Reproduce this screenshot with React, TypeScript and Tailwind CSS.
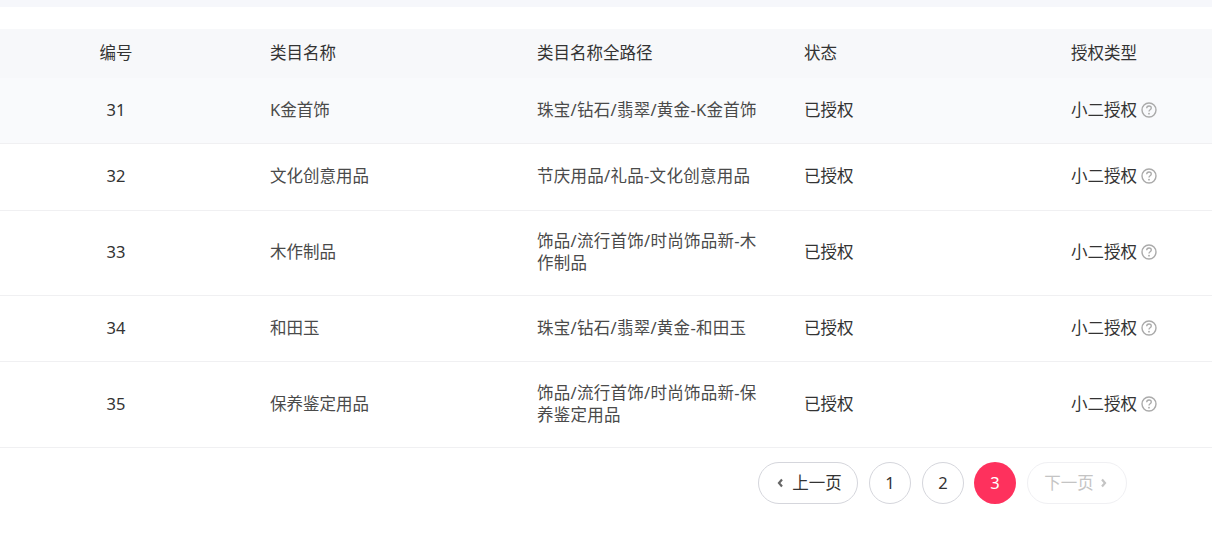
const rows = [
  { id: 31, name: 'K金首饰', path: '珠宝/钻石/翡翠/黄金-K金首饰', h: 'h-[66px]', bg: 'bg-[#f9fafc]' },
  { id: 32, name: '文化创意用品', path: '节庆用品/礼品-文化创意用品', h: 'h-[67px]', bg: 'bg-white' },
  { id: 33, name: '木作制品', path: '饰品/流行首饰/时尚饰品新-木作制品', h: 'h-[85px]', bg: 'bg-white' },
  { id: 34, name: '和田玉', path: '珠宝/钻石/翡翠/黄金-和田玉', h: 'h-[66px]', bg: 'bg-white' },
  { id: 35, name: '保养鉴定用品', path: '饰品/流行首饰/时尚饰品新-保养鉴定用品', h: 'h-[86px]', bg: 'bg-white' },
]

function HelpIcon() {
  return (
    <svg width="16" height="16" viewBox="0 0 16 16" fill="none" className="ml-[4px] shrink-0">
      <circle cx="8" cy="8" r="7" stroke="#aaaaaa" strokeWidth="1.400" />
      <path d="M5.700 6.300c0-1.400 1-2.300 2.300-2.300s2.300.9 2.300 2.100c0 1.700-2.300 1.600-2.300 3.300" stroke="#aaaaaa" strokeWidth="1.300" />
      <circle cx="8" cy="11.700" r=".9" fill="#aaaaaa" />
    </svg>
  )
}

function Chevron({ left, color }: { left?: boolean; color: string }) {
  return (
    <svg width="7" height="10" viewBox="0 0 7 10" fill="none">
      <path d={left ? 'M5 1.500 2 5l3 3.500' : 'M2 1.500 5 5 2 8.500'} stroke={color} strokeWidth="2.200" />
    </svg>
  )
}

export default function App() {
  return (
    <div className="h-[547px] w-[1212px] overflow-hidden bg-white font-['Noto_Sans','Noto_Sans_CJK_SC',sans-serif] text-[16.5px] leading-[22px] text-[#4a4a4a]">
      <div className="h-[7px] bg-[#f6f7fb]" />
      <div className="mt-[22px] flex h-[49px] items-center bg-[#f7f8fa] pb-[2px] text-[#333]">
        <div className="w-[232px] text-center">编号</div>
        <div className="ml-[38px] w-[267px]">类目名称</div>
        <div className="w-[267px]">类目名称全路径</div>
        <div className="w-[267px]">状态</div>
        <div>授权类型</div>
      </div>
      {rows.map((r) => (
        <div key={r.id} className={`flex items-center border-b border-[#f0f0f2] pb-[2px] ${r.h} ${r.bg}`}>
          <div className="w-[232px] text-center text-[#333]">{r.id}</div>
          <div className="ml-[38px] w-[267px]">{r.name}</div>
          <div className="w-[267px] pr-[44px] tracking-[0.27px]">{r.path}</div>
          <div className="w-[267px] text-[#333]">已授权</div>
          <div className="flex items-center text-[#333]">
            小二授权
            <HelpIcon />
          </div>
        </div>
      ))}
      <div className="mt-[14px] flex justify-end pr-[85px] text-[#333]">
        <button className="mr-[11px] flex h-[42px] w-[100px] items-center justify-center gap-[8px] rounded-full border-[1.5px] border-[#d5d6dc] pl-[3px]">
          <Chevron left color="#666" />
          上一页
        </button>
        <button className="mr-[11px] h-[42px] w-[42px] rounded-full border-[1.5px] border-[#d5d6dc]">1</button>
        <button className="mr-[10px] h-[42px] w-[42px] rounded-full border-[1.5px] border-[#d5d6dc]">2</button>
        <button className="mr-[11px] h-[42px] w-[42px] rounded-full bg-[#fe315d] text-white">3</button>
        <button className="flex h-[42px] w-[100px] items-center justify-center gap-[6px] rounded-full border-[1.5px] border-[#f0f0f3] pr-[3px] text-[#c4c4c4]">
          下一页
          <Chevron color="#c4c4c4" />
        </button>
      </div>
    </div>
  )
}
